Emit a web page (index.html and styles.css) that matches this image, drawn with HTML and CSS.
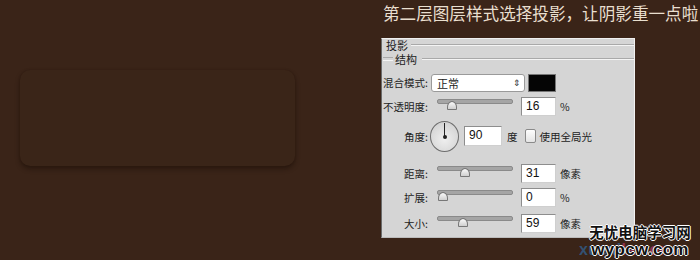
FILE: index.html
```html
<!DOCTYPE html>
<html lang="zh-CN">
<head>
<meta charset="utf-8">
<title>投影</title>
<link rel="stylesheet" href="styles.css">
</head>
<body class="page">
  <div class="left">
    <div class="card"></div>
  </div>
  <div class="right">
    <h1 class="title">第二层图层样式选择投影，让阴影重一点啦</h1>
    <div class="panel">
      <div class="legend"><span class="legend-text">投影</span><span class="legend-line"></span></div>
      <div class="sublegend"><span class="sub-text">结构</span><span class="legend-line"></span></div>

      <div class="row row-blend">
        <span class="label">混合模式:</span>
        <div class="select"><span>正常</span><span class="arrows">⇕</span></div>
        <div class="swatch"></div>
      </div>

      <div class="row">
        <span class="label">不透明度:</span>
        <div class="slider"><div class="track"></div><div class="thumb" style="left:10px"></div></div>
        <div class="input">16</div>
        <span class="unit">%</span>
      </div>

      <div class="row row-angle">
        <span class="label">角度:</span>
        <div class="dial"><span class="needle"></span><span class="dot"></span></div>
        <div class="input input-wide">90</div>
        <span class="unit unit-deg">度</span>
        <span class="check"></span>
        <span class="check-label">使用全局光</span>
      </div>

      <div class="row row-dist">
        <span class="label">距离:</span>
        <div class="slider"><div class="track"></div><div class="thumb" style="left:23px"></div></div>
        <div class="input">31</div>
        <span class="unit">像素</span>
      </div>

      <div class="row">
        <span class="label">扩展:</span>
        <div class="slider"><div class="track"></div><div class="thumb" style="left:1px"></div></div>
        <div class="input">0</div>
        <span class="unit">%</span>
      </div>

      <div class="row row-size">
        <span class="label">大小:</span>
        <div class="slider"><div class="track"></div><div class="thumb" style="left:21px"></div></div>
        <div class="input">59</div>
        <span class="unit">像素</span>
      </div>
    </div>
  </div>

  <div class="watermark">
    <div class="wm-cn">无忧电脑学习网</div>
    <div class="wm-en"><span class="wm-ghost"><span class="blue">xuexi</span><span class="pink">la.com</span></span><span class="wm-main">wypcw.com</span></div>
  </div>
</body>
</html>
```

FILE: styles.css
```css
* { box-sizing: border-box; }

html, body { margin: 0; padding: 0; }

.page {
  width: 700px;
  height: 260px;
  overflow: hidden;
  background: #3a2418;
  display: flex;
  font-family: "Noto Sans CJK SC", "Noto Sans", sans-serif;
  position: relative;
}

.left {
  width: 381px;
  flex: none;
  padding: 70px 0 0 20px;
}

.card {
  width: 275px;
  height: 96px;
  border-radius: 10px;
  background: #3a2518;
  box-shadow: 0 3px 5px rgba(22, 11, 4, 0.45), 0 0 2px rgba(30, 16, 8, 0.25);
}

.right {
  flex: none;
  width: 319px;
  display: flex;
  flex-direction: column;
}

.title {
  margin: 0;
  height: 38px;
  padding: 2px 0 0 2px;
  font-size: 16.6px;
  line-height: 22px;
  font-weight: normal;
  color: #e9dfcf;
  white-space: nowrap;
}

.panel {
  width: 254px;
  height: 200px;
  background: #d5d5d5;
  border-left: 1px solid #6a6a6a;
  border-top: 1px solid #f0f0f0;
  border-right: 1px solid #f2f2f2;
  border-bottom: 1px solid #bbb;
  font-size: 10.5px;
  color: #222;
  display: flex;
  flex-direction: column;
}

.legend {
  height: 12px;
  display: flex;
  align-items: center;
  padding-left: 4px;
}
.legend-text { line-height: 12px; font-size: 11px; }
.legend-line {
  flex: 1;
  height: 2px;
  margin-left: 3px;
  border-top: 1px solid #a9a9a9;
  border-bottom: 1px solid #f4f4f4;
}

.sublegend {
  height: 16px;
  display: flex;
  align-items: center;
  padding-left: 1px;
}
.sublegend::before {
  content: "";
  width: 10px;
  height: 2px;
  border-top: 1px solid #a9a9a9;
  border-bottom: 1px solid #f4f4f4;
}
.sub-text { padding: 0 2px; font-size: 11px; line-height: 14px; }

.row {
  height: 20px;
  display: flex;
  align-items: center;
  margin-top: 4px;
}
.row-blend { margin-top: 6px; height: 19px; }

.label {
  width: 46px;
  flex: none;
  text-align: right;
  margin-right: 3px;
  white-space: nowrap;
}

.select {
  width: 94px;
  height: 18px;
  background: #fff;
  border: 1px solid #9a9a9a;
  border-radius: 3px;
  display: flex;
  align-items: center;
  justify-content: space-between;
  padding: 0 3px 0 5px;
  font-size: 11px;
}
.arrows { font-size: 9px; color: #333; }

.swatch {
  width: 28px;
  height: 18px;
  margin-left: 3px;
  background: #050505;
  border: 1px solid #777;
}

.slider {
  position: relative;
  width: 85px;
  height: 20px;
  flex: none;
}
.track {
  position: absolute;
  left: 6px;
  top: 3px;
  width: 76px;
  height: 5px;
  background: #a5a5a5;
  border: 1px solid #8a8a8a;
  border-radius: 2px;
}
.thumb {
  position: absolute;
  top: 5px;
  width: 10px;
  height: 9px;
  margin-left: 6px;
  background: linear-gradient(#fafafa, #cfcfcf);
  border: 1px solid #777;
  border-radius: 50% 50% 1px 1px / 70% 70% 1px 1px;
}

.input {
  width: 35px;
  height: 19px;
  margin-left: 5px;
  background: #fff;
  border: 1px solid #8d8d8d;
  border-right-color: #cfcfcf;
  border-bottom-color: #cfcfcf;
  font-family: "Liberation Sans", sans-serif;
  font-size: 12px;
  line-height: 17px;
  padding-left: 4px;
  color: #111;
}
.unit { margin-left: 4px; font-size: 10.5px; }

.row-angle { height: 32px; margin-top: 4px; }
.dial {
  position: relative;
  width: 29px;
  height: 31px;
  margin-left: -1px;
  border-radius: 50%;
  border: 1px solid #6d6d6d;
  background: radial-gradient(circle at 50% 60%, #efefef, #d6d6d6 70%, #c4c4c4);
  flex: none;
}
.needle {
  position: absolute;
  left: 13px;
  top: 1px;
  width: 1px;
  height: 14px;
  background: #222;
}
.dot {
  position: absolute;
  left: 11.5px;
  top: 13.5px;
  width: 4px;
  height: 4px;
  border-radius: 50%;
  background: #222;
}
.input-wide { width: 38px; height: 20px; }
.unit-deg { margin-left: 5px; }
.check {
  width: 11px;
  height: 14px;
  margin-left: 7px;
  border: 1px solid #8a8a8a;
  border-radius: 2px;
  background: linear-gradient(#fdfdfd, #e4e4e4);
}
.check-label { margin-left: 4px; white-space: nowrap; }

.row-dist { margin-top: 11px; }
.row-size { margin-top: 6px; }

.watermark {
  position: absolute;
  left: 585px;
  top: 223px;
  width: 110px;
  text-align: center;
}
.wm-cn {
  font-size: 14.5px;
  line-height: 18px;
  font-weight: bold;
  color: #111;
  text-shadow: 1px 0 0 #fff, -1px 0 0 #fff, 0 1px 0 #fff, 0 -1px 0 #fff;
  white-space: nowrap;
}
.wm-en {
  position: relative;
  font-family: "Liberation Sans", sans-serif;
  font-weight: bold;
  font-size: 17px;
  line-height: 17px;
  letter-spacing: 0.3px;
}
.wm-main {
  position: relative;
  color: #111;
  text-shadow: 1px 0 0 #fff, -1px 0 0 #fff, 0 1px 0 #fff, 0 -1px 0 #fff;
}
.wm-ghost {
  position: absolute;
  left: -6px;
  top: 1px;
  font-size: 16px;
  line-height: 16px;
  opacity: 0.6;
  white-space: nowrap;
}
.blue { color: #2f6fae; }
.pink { color: #c23a6a; }
```
